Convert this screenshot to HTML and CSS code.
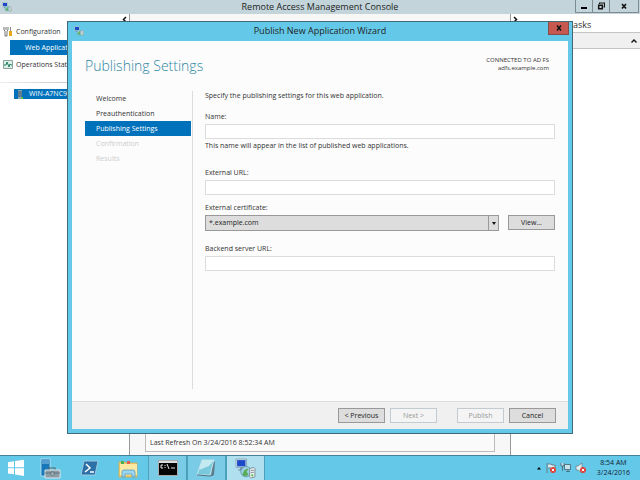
FILE: index.html
```html
<!DOCTYPE html>
<html lang="en">
<head>
  <meta charset="UTF-8">
  <meta name="viewport" content="width=device-width, initial-scale=1.0">
  <title>Remote Access Management Console</title>
  <link rel="stylesheet" href="styles.css">
</head>
<body>
  <!-- shared icon for the console and the wizard -->
  <svg class="sprite" aria-hidden="true">
    <symbol id="remote" viewBox="0 0 20 20">
      <path d="M1 1h10v8H1z" fill="#dfe8ef" stroke="#68869c" stroke-width=".6"/>
      <path d="M2 2h8v6H2z" fill="#1b49c8"/>
      <path d="M5 9h2v2h2v1H3v-1h2z" fill="#6d8796"/>
      <circle cx="10.500" cy="13" r="5" fill="#9fcfe4" stroke="#4a829c" stroke-width=".6"/>
      <path d="M7 16c1-4 3-6 6-6l-2 3 2 3c-3 1.500-5 1.500-6 0z" fill="#58ad55"/>
      <path d="M14 10l4-1 1 1v8l-4 1-1-1z" fill="#edf1f3" stroke="#71828c" stroke-width=".8"/>
      <path d="M15 12l3-.5M15 14l3-.5" stroke="#71828c" stroke-width=".8"/>
      <circle cx="16.500" cy="16.500" r="1" fill="#48bd39"/>
    </symbol>
  </svg>

  <div class="desktop">
    <header class="console-title">
      <svg class="app-icon"><use href="#remote"/></svg>
      <h1>Remote Access Management Console</h1>
      <div class="window-buttons">
        <button aria-label="Minimize"><svg width="8" height="8"><path d="M1 5h6v2H1z"/></svg></button>
        <button aria-label="Restore"><svg width="8" height="8" fill="none" stroke="#111"><path d="M2.500 2V1h5v4h-1" stroke-width="1.200"/><path d="M1.700 3.200h3.600v3.600H1.700z" stroke-width="1.500"/></svg></button>
        <button aria-label="Close" class="wide"><svg width="8" height="8"><path d="M2 2l4 4.500M6 2L2 6.500" stroke="#111" stroke-width="1.600"/></svg></button>
      </div>
    </header>

    <main class="console">
      <nav class="tree">
        <a href="#" class="tree-item">
          <svg width="10" height="11" viewBox="0 0 10 11"><path d="M1 1v3l1 1v5h2V5l1-1V1M3 1v3" fill="none" stroke="#777" stroke-width="1"/><path d="M7 1h1v4H7z" fill="#888"/><path d="M6 5h3v5H6z" fill="#e8a91b"/></svg>
          Configuration
        </a>
        <a href="#" class="tree-item active">Web Application Proxy</a>
        <a href="#" class="tree-item">
          <svg width="10" height="10" viewBox="0 0 10 10"><path d="M.5.500h9v8h-9z" fill="#dcefe9" stroke="#8ca39c"/><path d="M1 5h2l1-3 2 5 1-3 1 1h1" fill="none" stroke="#247e60"/></svg>
          Operations Status
        </a>
        <div class="rule"></div>
        <a href="#" class="tree-item server">
          <svg width="6" height="9"><path d="M1 0h4v9H1z" fill="#86a4b5"/><path d="M1 2h4M1 4h4M1 6h4" stroke="#38596d"/><path d="M4 7h2v2H4z" fill="#5ec148"/></svg>
          WIN-A7NC9O1
        </a>
      </nav>
      <section class="details">
        <svg class="arrow left" width="5" height="7"><path d="M4 1L1.500 3.500 4 6" fill="none" stroke="#111" stroke-width="1.500"/></svg>
        <svg class="arrow right" width="5" height="7"><path d="M1 1l2.500 2.500L1 6" fill="none" stroke="#111" stroke-width="1.500"/></svg>
        <div class="refresh">Last Refresh On 3/24/2016 8:52:34 AM</div>
      </section>
      <aside class="tasks">
        <h2>Tasks</h2>
        <div class="tasks-bar">
          <svg width="8" height="6"><path d="M1.500 4.500L4 2l2.500 2.500" fill="none" stroke="#111" stroke-width="1.400"/></svg>
        </div>
      </aside>
    </main>

    <footer class="taskbar">
      <button class="start" aria-label="Start">
        <svg width="18" height="18" viewBox="0 0 18 18" fill="#fff"><path d="M1 3.300L7 2.300v6H1zM8 2.100l9-1.400v7.600H8zM1 9.300h6v6l-6-.9zM8 9.300h9V17l-9-1.500z"/></svg>
      </button>
      <button aria-label="Server Manager">
        <svg width="21" height="21" viewBox="0 0 21 21"><path d="M1 1h9v17H1z" fill="#1877b8" stroke="#d3edf7" stroke-width=".7"/><path d="M2 3h7M2 5h7" stroke="#92c9e7"/><path d="M9 12v-2h6v2" fill="none" stroke="#52656e" stroke-width="1.200"/><path d="M5 12h15v8H5z" fill="#8b9da7" stroke="#dce5e9"/><path d="M5 15h15M11 14h3v3h-3z" stroke="#52656e" fill="#e1e7e9" stroke-width=".7"/></svg>
      </button>
      <button aria-label="PowerShell">
        <svg width="19" height="18" viewBox="0 0 19 18"><path d="M4 2h14l-3 14H1z" fill="#2c70a7" stroke="#9cc7df"/><path d="M6 5l4 4-5 4M10 13h4" fill="none" stroke="#fff" stroke-width="1.500"/></svg>
      </button>
      <button aria-label="File Explorer">
        <svg width="21" height="19" viewBox="0 0 21 19"><path d="M1 3h6l1 1h11v14H1z" fill="#efce70" stroke="#d9aa45" stroke-width=".7"/><path d="M3 2h3v3H3z" fill="#4aaf52"/><path d="M9 2h3v3H9z" fill="#e95b4b"/><path d="M2 5h17v11H2z" fill="#fbe8a2"/><path d="M4 18v-5q0-2 2-2h9q2 0 2 2v5h-3v-3H7v3z" fill="#9bd5f0" stroke="#559dc7" stroke-width=".8"/></svg>
      </button>
      <button class="running" aria-label="Command Prompt">
        <svg width="20" height="16" viewBox="0 0 20 16"><path d="M.5.500h19v15H.5z" fill="#060606" stroke="#aaa"/><path d="M1 1h18v2H1z" fill="#d9dedf"/><path d="M5 5H3v3h2M7 5v1M7 7v1M9 4l2 5M13 8h4" fill="none" stroke="#fff" stroke-width=".9"/></svg>
      </button>
      <button class="running" aria-label="Notepad">
        <svg width="21" height="18" viewBox="0 0 21 18"><path d="M17 2l2 1-1 13-3 1z" fill="#5f7d8b"/><path d="M6 1h12l-4 15H1z" fill="#79c8db" stroke="#dcf1f5" stroke-width=".7"/><path d="M6 1h12l-5 6-10 4z" fill="#c4eaf1"/><path d="M1 16l13 1 3-1" fill="none" stroke="#527482"/></svg>
      </button>
      <button class="running current" aria-label="Remote Access">
        <svg width="21" height="21"><use href="#remote"/></svg>
      </button>
      <div class="tray">
        <svg width="6" height="4"><path d="M1 3.500L3 1l2 2.500z"/></svg>
        <svg width="12" height="12" viewBox="0 0 12 12"><path d="M2 1v10M3 2h3l1 1h3v4H7L6 6H3" fill="#dcecf2" stroke="#657c87"/><circle cx="8" cy="8" r="3" fill="#e03d35"/><path d="M6.800 6.800l2.400 2.400m0-2.400L6.800 9.200" stroke="#fff"/></svg>
        <svg width="12" height="12" viewBox="0 0 12 12" fill="#c9e3ec" stroke="#4c6e7d" stroke-width=".9"><path d="M4.500 2.500h6v5h-6zM6 9.500h4M8 8v2M1 1v3h3V1M2.500 4v5"/></svg>
        <svg width="12" height="12" viewBox="0 0 12 12"><path d="M1 4h2l4-3v10L3 8H1z" fill="#e5f0f3" stroke="#6d808a" stroke-width=".8"/><circle cx="8" cy="8" r="3" fill="#e03d35"/><path d="M6.800 6.800l2.400 2.400m0-2.400L6.800 9.200" stroke="#fff"/></svg>
        <div class="clock">
          <div>8:54 AM</div>
          <div>3/24/2016</div>
        </div>
      </div>
    </footer>

    <div class="wizard" role="dialog" aria-labelledby="wizard-title">
      <header class="wizard-title">
        <svg class="app-icon"><use href="#remote"/></svg>
        <h2 id="wizard-title">Publish New Application Wizard</h2>
        <button class="close" aria-label="Close wizard"><svg width="8" height="8"><path d="M2 1.500l4 5M6 1.500l-4 5" stroke="#111" stroke-width="1.500"/></svg></button>
      </header>
      <form class="wizard-page">
        <div class="page-head">
          <h3>Publishing Settings</h3>
          <div class="connected">CONNECTED TO AD FS<br>adfs.example.com</div>
        </div>
        <div class="page-body">
          <ul class="steps">
            <li>Welcome</li>
            <li>Preauthentication</li>
            <li class="active">Publishing Settings</li>
            <li class="disabled">Confirmation</li>
            <li class="disabled">Results</li>
          </ul>
          <div class="fields">
            <p class="intro">Specify the publishing settings for this web application.</p>
            <div class="field with-hint">
              <label for="name">Name:</label>
              <input type="text" id="name">
              <p>This name will appear in the list of published web applications.</p>
            </div>
            <div class="field external">
              <label for="external-url">External URL:</label>
              <input type="text" id="external-url">
            </div>
            <div class="field">
              <label for="certificate">External certificate:</label>
              <div class="cert-row">
                <div class="select">
                  <select id="certificate"><option>*.example.com</option></select>
                  <span class="drop"></span>
                </div>
                <button type="button">View...</button>
              </div>
            </div>
            <div class="field">
              <label for="backend-url">Backend server URL:</label>
              <input type="text" id="backend-url">
            </div>
          </div>
        </div>
        <div class="actions">
          <button type="button">&lt; Previous</button>
          <button type="button" disabled>Next &gt;</button>
          <button type="button" class="publish" disabled>Publish</button>
          <button type="button">Cancel</button>
        </div>
      </form>
    </div>
  </div>
</body>
</html>
```

FILE: styles.css
```css
* {
  box-sizing: border-box;
}

body {
  margin: 0;
  font-family: "Open Sans", "Noto Sans", sans-serif;
  font-size: 7px;
  line-height: 10px;
  color: #333;
}

h1, h2, h3, p, ul {
  margin: 0;
  padding: 0;
  font-weight: normal;
}

button, input, select {
  font: inherit;
  color: inherit;
  margin: 0;
  padding: 0;
  border-radius: 0;
}

button {
  display: flex;
  align-items: center;
  justify-content: center;
}

a {
  color: inherit;
  text-decoration: none;
}

svg {
  flex: none;
}

.sprite {
  position: absolute;
  width: 0;
  height: 0;
}

.desktop {
  position: relative;
  display: flex;
  flex-direction: column;
  min-height: 100vh;
  overflow: hidden;
  background: #fff;
}

/* console window */
.console-title {
  display: grid;
  grid-template-columns: 1fr auto 1fr;
  height: 14px;
  background: #c3d5db;
  color: #222;
}

.app-icon {
  width: 10px;
  height: 10px;
  margin: 2px;
}

.console-title h1,
.wizard-title h2 {
  font-size: 9px;
  line-height: 14px;
}

.window-buttons {
  display: flex;
  justify-self: end;
  margin-right: 1px;
}

.window-buttons button {
  width: 17px;
  height: 13px;
  border: 1px solid #7e8c92;
  border-top: 0;
  border-right: 0;
  background: none;
}

.window-buttons .wide {
  width: 30px;
  border-right: 1px solid #7e8c92;
}

.console {
  flex: 1;
  display: grid;
  grid-template-columns: 129px 1fr 129px;
}

.tree {
  padding-top: 10px;
}

.tree-item {
  display: flex;
  align-items: center;
  gap: 3px;
  height: 15px;
  padding-left: 3px;
  white-space: nowrap;
}

.tree-item.active {
  margin: 1px 0 2px 10px;
  padding-left: 15px;
  background: #0072bc;
  color: #fff;
}

.rule {
  height: 1px;
  margin: 10px 0 6px;
  background: linear-gradient(to right, #eee, #aaa);
}

.tree-item.server {
  height: 10px;
  margin-left: 14px;
  gap: 6px;
  background: #0072bc;
  color: #fff;
}

.details {
  position: relative;
  display: flex;
  flex-direction: column;
  justify-content: flex-end;
  padding: 0 15px 3px;
  border: solid #999;
  border-width: 0 1px;
  background: #f7f7f7;
}

.arrow {
  position: absolute;
  top: 2px;
}

.arrow.left {
  left: -8px;
}

.arrow.right {
  right: -8px;
}

.refresh {
  height: 19px;
  padding: 0 4px;
  border: 1px solid #bbb;
  border-top: 0;
  background: #fafafa;
  line-height: 20px;
}

.tasks h2 {
  padding: 4px 0 0 57px;
  font-size: 9px;
  line-height: 14px;
}

.tasks-bar {
  display: flex;
  align-items: center;
  justify-content: flex-end;
  height: 17px;
  padding-right: 2px;
  border: solid #c4c4c4;
  border-width: 1px 0;
  background: #f0f0f0;
}

/* taskbar */
.taskbar {
  display: flex;
  height: 25px;
  border-top: 1px solid #467f96;
  background: #64c9e9;
}

.taskbar button {
  width: 39px;
  border: 0;
  background: none;
}

.taskbar .start {
  width: 31px;
}

.taskbar .running {
  border: solid #4ba0bc;
  border-width: 0 1px;
  background: #7acbe5;
}

.taskbar .current {
  background: #b0e0f0;
}

.tray {
  display: flex;
  align-items: center;
  gap: 3px;
  margin-left: auto;
  padding-right: 10px;
}

.clock {
  margin-left: 7px;
  text-align: center;
  color: #123;
}

/* wizard dialog, floats over the console */
.wizard {
  position: absolute;
  top: 21px;
  right: 67px;
  bottom: 46px;
  left: 67px;
  display: flex;
  flex-direction: column;
  padding: 0 4px 4px;
  border: 1px solid #426978;
  background: #64c9e9;
}

.wizard-title {
  display: grid;
  grid-template-columns: 1fr auto 1fr;
  height: 19px;
  color: #222;
}

.wizard-title h2 {
  line-height: 18px;
}

.wizard-title .app-icon {
  margin-top: 4px;
}

.wizard-title .close {
  justify-self: end;
  width: 21px;
  height: 13px;
  margin-right: -1px;
  border: 1px solid #854d49;
  border-top: 0;
  background: #c75850;
}

.wizard-page {
  flex: 1;
  display: flex;
  flex-direction: column;
  background: #fcfcfc;
}

.page-head {
  display: flex;
  justify-content: space-between;
  height: 50px;
  padding: 15px 19px 0 13px;
}

.page-head h3 {
  font-size: 14px;
  font-weight: 300;
  line-height: 20px;
  color: #2e86a3;
}

.connected {
  font-size: 6px;
  line-height: 8px;
  text-align: right;
}

.page-body {
  flex: 1;
  display: grid;
  grid-template-columns: 108px 1fr;
  gap: 12px;
  padding: 0 13px 12px;
}

.steps {
  padding-right: 1px;
  border-right: 1px solid #ddd;
  list-style: none;
}

.steps li {
  height: 15px;
  padding-left: 11px;
  line-height: 15px;
}

.steps .active {
  background: #0072bc;
  color: #fff;
}

.steps .disabled {
  color: #ccc;
}

.intro {
  margin-bottom: 11px;
}

.field {
  display: flex;
  flex-direction: column;
  gap: 2px;
  margin-bottom: 13px;
}

.field.with-hint {
  margin-bottom: 17px;
}

.field.external {
  margin-bottom: 8px;
}

.field input {
  width: 100%;
  height: 15px;
  padding: 0 3px;
  border: 1px solid #dcdcdc;
  background: #fff;
}

.cert-row {
  display: flex;
  gap: 9px;
}

.select {
  position: relative;
  flex: 1;
}

.select select {
  display: block;
  width: 100%;
  height: 16px;
  padding: 0 3px;
  border: 1px solid #999;
  background: #ddd;
  color: #222;
  appearance: none;
}

.drop {
  position: absolute;
  top: 1px;
  right: 1px;
  bottom: 1px;
  display: flex;
  align-items: center;
  justify-content: center;
  width: 10px;
  border-left: 1px solid #999;
  pointer-events: none;
}

.drop::before {
  content: "";
  border: 2px solid transparent;
  border-top: 3px solid #111;
  border-bottom: 0;
}

.cert-row button,
.actions button {
  width: 47px;
  height: 15px;
  border: 1px solid #999;
  background: #ddd;
  color: #222;
}

.actions {
  display: flex;
  justify-content: flex-end;
  gap: 5px;
  padding: 6px 12px;
  border-top: 1px solid #ddd;
  background: #f0f0f0;
}

.actions button:disabled {
  border-color: #c4cbd0;
  background: #f4f4f4;
  color: #999;
}

.actions .publish {
  margin-left: 15px;
}
```
